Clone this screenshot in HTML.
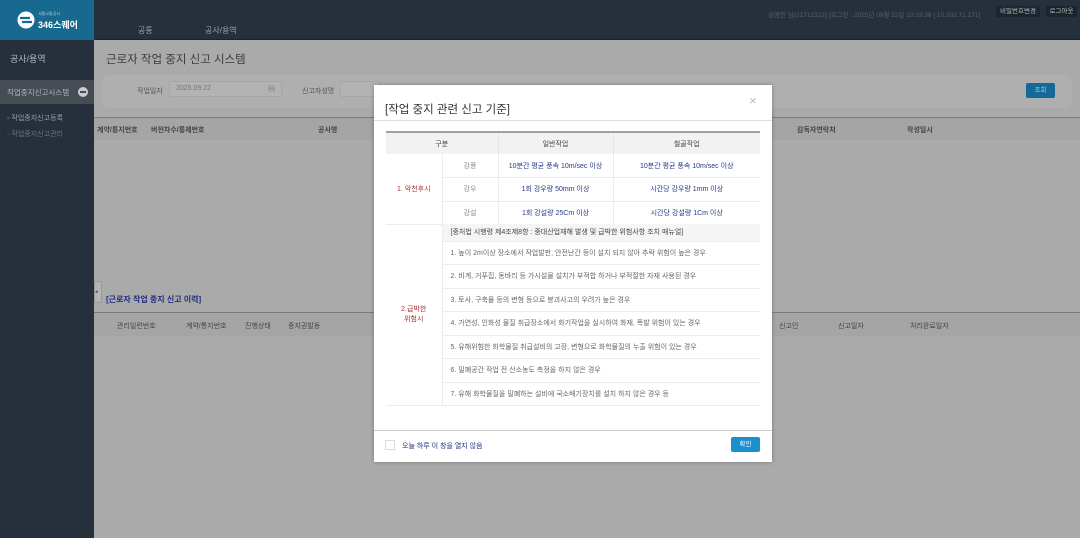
<!DOCTYPE html>
<html><head><meta charset="utf-8"><style>
*{margin:0;padding:0;box-sizing:border-box}
body{width:1080px;height:538px;overflow:hidden;background:#aaaaaa;font-family:"Liberation Sans","Noto Sans CJK KR",sans-serif;position:relative}
.abs{position:absolute}
.hdr{left:0;top:0;width:1080px;height:40px;background:#25303c;border-bottom:1px solid #1b242e}
.logo{left:0;top:0;width:94px;height:40px;background:#17698f}
.side{left:0;top:40px;width:94px;height:498px;background:#25303c}
.t{font-size:8px;color:#6b737d;white-space:nowrap}
.modal{left:374px;top:85px;width:398px;height:377px;background:#fff;box-shadow:0 0 4px rgba(0,0,0,.3)}
table{border-collapse:collapse;font-size:7px}
td{text-align:center;border-bottom:1px solid #ececec;white-space:nowrap}
.mt td{height:23.5px;color:#243786}
.mt th{height:22px;background:#f2f2f2;font-weight:normal;color:#444;border-top:2px solid #a0a0a0;border-left:1px solid #e4e4e4}
.g{color:#888!important}
.li td{text-align:left;padding-left:8px;color:#666;height:23.5px}
</style></head><body>
<div class="abs hdr"></div>
<div class="abs logo">
<svg class="abs" style="left:17px;top:11px" width="18" height="18" viewBox="0 0 18 18"><circle cx="9" cy="9" r="8.5" fill="#fff"/><path d="M3 7h10M5 11h10" stroke="#17698f" stroke-width="2.2"/></svg>
<div class="abs" style="left:38px;top:11px;font-size:4px;color:#bcd;">서울교통공사</div>
<div class="abs" style="left:38px;top:18px;font-size:9px;color:#fff;font-weight:bold">346스퀘어</div>
</div>
<div class="abs t" style="left:138px;top:25px;color:#9aa3ad">공통</div>
<div class="abs t" style="left:205px;top:25px;color:#9aa3ad">공사/용역</div>
<div class="abs t" style="left:768px;top:9px;font-size:6.5px;color:#56606b">김영민 님(21712322) [로그인 : 2025년 09월 22일 10:19:36 | 10.202.71.171]</div>
<div class="abs" style="left:996px;top:6px;width:44px;height:11px;background:#1b252f;font-size:6.5px;color:#bbb;text-align:center;line-height:11px">비밀번호변경</div>
<div class="abs" style="left:1046px;top:6px;width:31px;height:11px;background:#1b252f;font-size:6.5px;color:#bbb;text-align:center;line-height:11px">로그아웃</div>
<div class="abs side"></div>
<div class="abs t" style="left:10px;top:52px;font-size:9px;color:#b0b6bd">공사/용역</div>
<div class="abs" style="left:0;top:80px;width:94px;height:24px;background:#464c54"></div>
<div class="abs t" style="left:7px;top:87px;color:#b0b6bd;font-size:7.5px">작업중지신고시스템</div>
<div class="abs" style="left:78px;top:87px;width:10px;height:10px;border-radius:50%;background:#ccc"><div style="margin:4px 2px;height:2px;background:#464c54"></div></div>
<div class="abs t" style="left:7px;top:113px;color:#98a0a8;font-size:7px">◦ 작업중지신고등록</div>
<div class="abs t" style="left:7px;top:129px;color:#6b737d;font-size:7px">◦ 작업중지신고관리</div>
<div class="abs" style="left:94px;top:40px;width:986px;height:498px;background:#aaaaaa"></div>
<div class="abs t" style="left:106px;top:51px;font-size:11.5px;color:#3c3c3c">근로자 작업 중지 신고 시스템</div>
<div class="abs" style="left:102px;top:75px;width:970px;height:33px;background:#afafaf;border-radius:6px"></div>
<div class="abs t" style="left:137px;top:86px;font-size:7px;color:#555">작업일자</div>
<div class="abs" style="left:169px;top:81px;width:113px;height:16px;background:#b3b3b3;border:1px solid #a6a6a6"></div>
<div class="abs t" style="left:176px;top:85px;font-size:7px;color:#777">2025.09.22</div>
<div class="abs t" style="left:268px;top:84px;font-size:7px;color:#555">▤</div>
<div class="abs t" style="left:302px;top:86px;font-size:7px;color:#555">신고자성명</div>
<div class="abs" style="left:340px;top:81px;width:40px;height:16px;background:#b3b3b3;border:1px solid #a6a6a6"></div>
<div class="abs" style="left:1026px;top:83px;width:29px;height:15px;background:#136a98;border-radius:2px;font-size:6.5px;color:#bbd;text-align:center;line-height:15px">조회</div>
<div class="abs" style="left:94px;top:117px;width:986px;height:23px;background:#a5a5a5;border-top:1px solid #7b7b7b"></div>
<div class="abs t" style="left:97px;top:125px;font-size:7px;color:#444;font-weight:bold">계약/통지번호</div>
<div class="abs t" style="left:151px;top:125px;font-size:7px;color:#444;font-weight:bold">버전차수/통제번호</div>
<div class="abs t" style="left:318px;top:125px;font-size:7px;color:#444;font-weight:bold">공사명</div>
<div class="abs t" style="left:797px;top:125px;font-size:7px;color:#444;font-weight:bold">감독자연락처</div>
<div class="abs t" style="left:907px;top:125px;font-size:7px;color:#444;font-weight:bold">작성일시</div>
<div class="abs" style="left:94px;top:281px;width:8px;height:22px;background:#b5b5b5;border:1px solid #999;border-radius:2px;font-size:5px;line-height:20px;color:#333">◂</div>
<div class="abs t" style="left:106px;top:294px;font-size:8px;color:#232f80;font-weight:bold">[근로자 작업 중지 신고 이력]</div>
<div class="abs" style="left:94px;top:312px;width:986px;height:24px;background:#a5a5a5;border-top:1px solid #7b7b7b"></div>
<div class="abs t" style="left:117px;top:321px;font-size:7px;color:#444">관리일련번호</div>
<div class="abs t" style="left:186px;top:321px;font-size:7px;color:#444">계약/통지번호</div>
<div class="abs t" style="left:245px;top:321px;font-size:7px;color:#444">진행상태</div>
<div class="abs t" style="left:288px;top:321px;font-size:7px;color:#444">중지권발동</div>
<div class="abs t" style="left:779px;top:321px;font-size:7px;color:#444">신고인</div>
<div class="abs t" style="left:838px;top:321px;font-size:7px;color:#444">신고일자</div>
<div class="abs t" style="left:910px;top:321px;font-size:7px;color:#444">처리완료일자</div>

<div class="abs modal">
<div class="abs t" style="left:11px;top:16px;font-size:11.5px;color:#333">[작업 중지 관련 신고 기준]</div>
<div class="abs t" style="left:375px;top:8px;font-size:13px;color:#bbb">×</div>
<div class="abs" style="left:0;top:35px;width:398px;height:1px;background:#ddd"></div>
<table class="abs mt" style="left:12px;top:46px;width:374px">
<tr><th colspan="2" style="width:112px;border-left:none">구분</th><th style="width:115px">일반작업</th><th>철골작업</th></tr>
<tr><td rowspan="3" style="width:56px;color:#a33;border-right:1px solid #ececec">1. 악천후시</td><td class="g" style="width:56px;border-right:1px solid #ececec">강풍</td><td style="border-right:1px solid #ececec">10분간 평균 풍속 10m/sec 이상</td><td>10분간 평균 풍속 10m/sec 이상</td></tr>
<tr><td class="g" style="border-right:1px solid #ececec">강우</td><td style="border-right:1px solid #ececec">1회 강우량 50mm 이상</td><td>시간당 강우량 1mm 이상</td></tr>
<tr><td class="g" style="border-right:1px solid #ececec">강설</td><td style="border-right:1px solid #ececec">1회 강설량 25Cm 이상</td><td>시간당 강설량 1Cm 이상</td></tr>
</table>
<table class="abs li" style="left:12px;top:139px;width:374px">
<tr><td rowspan="8" style="width:56px;text-align:center;padding:0;color:#a33;border-right:1px solid #ececec;line-height:10px">2.급박한<br>위험시</td><td style="height:17px;background:#f5f5f5;color:#444">[중처법 시행령 제4조제8항 : 중대산업재해 발생 및 급박한 위험사항 조치 매뉴얼]</td></tr>
<tr><td>1. 높이 2m이상 장소에서 작업발판, 안전난간 등이 설치 되지 않아 추락 위험이 높은 경우</td></tr>
<tr><td>2. 비계, 거푸집, 동바리 등 가시설물 설치가 부적합 하거나 부적절한 자재 사용된 경우</td></tr>
<tr><td>3. 토사, 구축물 등의 변형 등으로 붕괴사고의 우려가 높은 경우</td></tr>
<tr><td>4. 가연성, 인화성 물질 취급장소에서 화기작업을 실시하여 화재, 폭발 위험이 있는 경우</td></tr>
<tr><td>5. 유해위험한 화학물질 취급설비의 고장, 변형으로 화학물질의 누출 위험이 있는 경우</td></tr>
<tr><td>6. 밀폐공간 작업 전 산소농도 측정을 하지 않은 경우</td></tr>
<tr><td>7. 유해 화학물질을 밀폐하는 설비에 국소배기장치를 설치 하지 않은 경우 등</td></tr>
</table>
<div class="abs" style="left:0;top:345px;width:398px;height:1px;background:#ccc"></div>
<div class="abs" style="left:11px;top:355px;width:10px;height:10px;border:1px solid #ddd"></div>
<div class="abs t" style="left:28px;top:356px;font-size:7px;color:#232f80">오늘 하루 이 창을 열지 않음</div>
<div class="abs" style="left:357px;top:352px;width:29px;height:15px;background:#1a8fd0;border-radius:2px;font-size:6.5px;color:#fff;text-align:center;line-height:15px">확인</div>
</div>
</body></html>
